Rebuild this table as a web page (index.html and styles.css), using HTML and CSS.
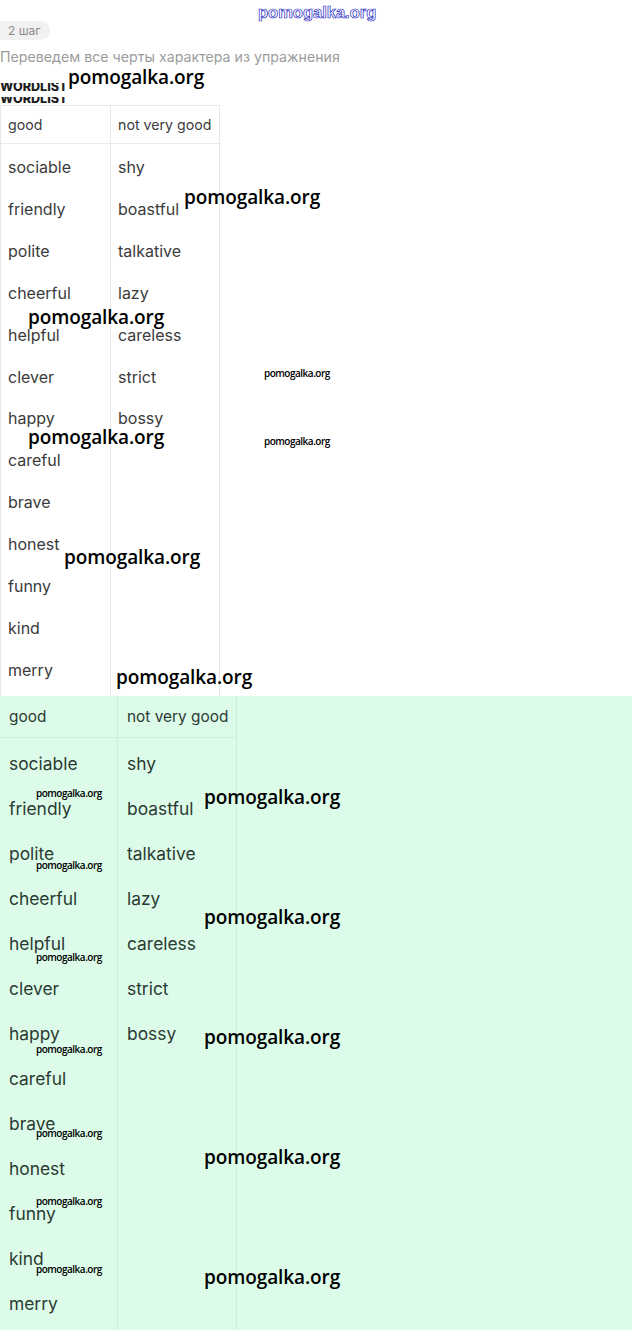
FILE: index.html
```html
<!DOCTYPE html>
<html lang="ru">
<head>
<meta charset="utf-8">
<title>Wordlist</title>
<link rel="stylesheet" href="styles.css">
</head>
<body>
<div class="page">
  <div class="step"><span class="badge">2 шаг</span></div>
  <p class="lead">Переведем все черты характера из упражнения</p>
  <div class="wl wl1"><span>WORDLIST</span></div>
  <div class="wl wl2"><span>WORDLIST</span></div>

  <div class="tbl t1">
    <div class="head">good</div>
    <div class="head">not very good</div>
    <div class="body">sociable<br>friendly<br>polite<br>cheerful<br>helpful<br>clever<br>happy<br>careful<br>brave<br>honest<br>funny<br>kind<br>merry</div>
    <div class="body">shy<br>boastful<br>talkative<br>lazy<br>careless<br>strict<br>bossy</div>
  </div>

  <div class="answer">
    <div class="tbl t2">
      <div class="head">good</div>
      <div class="head">not very good</div>
      <div class="body">sociable<br>friendly<br>polite<br>cheerful<br>helpful<br>clever<br>happy<br>careful<br>brave<br>honest<br>funny<br>kind<br>merry</div>
      <div class="body">shy<br>boastful<br>talkative<br>lazy<br>careless<br>strict<br>bossy</div>
    </div>
  </div>

  <span class="wm-top">pomogalka.org</span>
  <span class="wm big w1">pomogalka.org</span>
  <span class="wm big w2">pomogalka.org</span>
  <span class="wm big w3">pomogalka.org</span>
  <span class="wm small w4">pomogalka.org</span>
  <span class="wm big w5">pomogalka.org</span>
  <span class="wm small w6">pomogalka.org</span>
  <span class="wm big w7">pomogalka.org</span>
  <span class="wm big w8">pomogalka.org</span>
  <span class="wm small w9">pomogalka.org</span>
  <span class="wm big w10">pomogalka.org</span>
  <span class="wm small w11">pomogalka.org</span>
  <span class="wm big w12">pomogalka.org</span>
  <span class="wm small w13">pomogalka.org</span>
  <span class="wm big w14">pomogalka.org</span>
  <span class="wm small w15">pomogalka.org</span>
  <span class="wm small w16">pomogalka.org</span>
  <span class="wm big w17">pomogalka.org</span>
  <span class="wm small w18">pomogalka.org</span>
  <span class="wm small w19">pomogalka.org</span>
  <span class="wm big w20">pomogalka.org</span>
</div>
</body>
</html>
```

FILE: styles.css
```css
html, body {
  margin: 0;
  padding: 0;
  background: #ffffff;
}

.page {
  position: relative;
  width: 632px;
  height: 1330px;
  overflow: hidden;
  font-family: Inter, "Noto Sans", sans-serif;
}

.step {
  padding-top: 19px;
  height: 19px;
}

.badge {
  display: inline-flex;
  align-items: center;
  height: 19px;
  padding: 0 9px 0 10px;
  margin-left: -2px;
  background: #f1f1f1;
  border-radius: 0 10px 10px 0;
  color: #8a8a8a;
  font-size: 12px;
}

.lead {
  margin: 9px 0 0;
  font-size: 14.2px;
  line-height: 20px;
  color: #9c9c9c;
  white-space: nowrap;
}

.wl {
  display: flex;
  align-items: flex-end;
  overflow: hidden;
  font-weight: 800;
  font-size: 12.6px;
  line-height: 13px;
  color: #1d1d1d;
}

.wl1 {
  margin-top: 16px;
  height: 10px;
}

.wl2 {
  margin-top: 4px;
  height: 8px;
}

.tbl {
  display: grid;
}

.t1 {
  width: 220px;
  grid-template-columns: 110px 110px;
  grid-template-rows: 38px auto;
  border: 1px solid #e8e8e8;
  border-bottom: none;
  box-sizing: border-box;
  color: #3b3b3b;
  font-size: 16px;
}

.t1 .head {
  display: flex;
  align-items: center;
  padding-left: 7px;
  border-bottom: 1px solid #ebebeb;
  font-size: 14.2px;
}

.t1 .body {
  padding: 3px 0 4px 7px;
  line-height: 41.9px;
}

.t1 .head:nth-child(1),
.t1 .body:nth-child(3) {
  border-right: 1px solid #ebebeb;
}

.answer {
  background: #dcfce9;
  height: 635px;
}

.t2 {
  width: 236px;
  grid-template-columns: 118px 118px;
  grid-template-rows: 42px auto;
  color: #2c3a33;
  font-size: 17.4px;
  border-right: 1px solid #cfeedb;
}

.t2 .head {
  display: flex;
  align-items: center;
  padding-left: 9px;
  border-bottom: 1px solid #cfeedb;
  font-size: 15.4px;
}

.t2 .body {
  padding: 3px 0 4px 9px;
  line-height: 45px;
}

.t2 .head:nth-child(1),
.t2 .body:nth-child(3) {
  border-right: 1px solid #cfeedb;
}

.wm-top {
  position: absolute;
  left: 258px;
  top: 0;
  font-family: "Liberation Sans", Arial, sans-serif;
  font-size: 16.5px;
  font-weight: 700;
  line-height: 24px;
  color: #ffffff;
  -webkit-text-stroke: 0.7px #2626c4;
}

.wm {
  position: absolute;
  font-family: "Open Sans", sans-serif;
  color: #000000;
  white-space: nowrap;
}

.big {
  font-size: 19px;
  line-height: 24px;
  font-weight: 600;
  letter-spacing: -0.1px;
}

.small {
  font-size: 10px;
  line-height: 12px;
  font-weight: 600;
  letter-spacing: -0.5px;
}

.w1 { left: 68px; top: 65px; }
.w2 { left: 184px; top: 185px; }
.w3 { left: 28px; top: 305px; }
.w4 { left: 264px; top: 367px; }
.w5 { left: 28px; top: 425px; }
.w6 { left: 264px; top: 435px; }
.w7 { left: 64px; top: 545px; }
.w8 { left: 116px; top: 665px; }
.w9 { left: 36px; top: 787px; }
.w10 { left: 204px; top: 785px; }
.w11 { left: 36px; top: 859px; }
.w12 { left: 204px; top: 905px; }
.w13 { left: 36px; top: 951px; }
.w14 { left: 204px; top: 1025px; }
.w15 { left: 36px; top: 1043px; }
.w16 { left: 36px; top: 1127px; }
.w17 { left: 204px; top: 1145px; }
.w18 { left: 36px; top: 1195px; }
.w19 { left: 36px; top: 1263px; }
.w20 { left: 204px; top: 1265px; }
```
